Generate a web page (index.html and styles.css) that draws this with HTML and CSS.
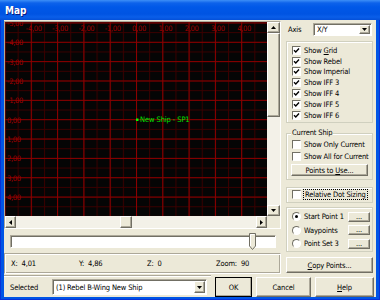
FILE: index.html
```html
<!DOCTYPE html>
<html lang="en">
<head>
<meta charset="UTF-8">
<title>Map</title>
<link rel="stylesheet" href="styles.css">
</head>
<body>
<div class="window">
  <div class="titlebar"><span class="title">Map</span></div>
  <div class="client">
    <div class="main">
      <div class="left">
        <div class="view">
          <div class="canvas">
            <svg width="262" height="194" viewBox="0 0 262 194">
              <defs>
                <pattern id="minor" width="13.15" height="9.675" x="-0.5" y="0.45" patternUnits="userSpaceOnUse">
                  <path d="M0.5 0V9.675M0 0.5H13.15" stroke="#3a0000" stroke-width="1" fill="none"/>
                </pattern>
                <pattern id="major" width="26.3" height="19.35" x="-0.5" y="0.45" patternUnits="userSpaceOnUse">
                  <path d="M0.5 0V19.35M0 0.5H26.3" stroke="#8c0000" stroke-width="1" fill="none"/>
                </pattern>
              </defs>
              <rect width="262" height="194" fill="#050505"/>
              <rect width="262" height="194" fill="url(#minor)"/>
              <rect width="262" height="194" fill="url(#major)"/>
              <g class="xlab" text-anchor="middle">
                <text x="28.8" y="8.5">-4,00</text>
                <text x="55.1" y="8.5">-3,00</text>
                <text x="81.4" y="8.5">-2,00</text>
                <text x="107.7" y="8.5">-1,00</text>
                <text x="134" y="8.5">0,00</text>
                <text x="160.3" y="8.5">1,00</text>
                <text x="186.6" y="8.5">2,00</text>
                <text x="212.9" y="8.5">3,00</text>
                <text x="239.2" y="8.5">4,00</text>
              </g>
              <g class="ylab">
                <text x="2" y="4">-5,00</text>
                <text x="2" y="23.3">-4,00</text>
                <text x="2" y="42.6">-3,00</text>
                <text x="2" y="62">-2,00</text>
                <text x="2" y="81.3">-1,00</text>
                <text x="2" y="100.6">0,00</text>
                <text x="2" y="120">1,00</text>
                <text x="2" y="139.3">2,00</text>
                <text x="2" y="158.7">3,00</text>
                <text x="2" y="178">4,00</text>
              </g>
              <rect x="131" y="96.5" width="2.5" height="2.5" fill="#00ff00"/>
              <text class="ship" x="135" y="100.3">New Ship - SP1</text>
            </svg>
          </div>
          <div class="vscroll">
            <div class="sbtn vbtn"><svg width="5" height="3" viewBox="0 0 5 3"><polygon points="0,3 5,3 2.5,0"/></svg></div>
            <div class="vtrack"><div class="vthumb"></div></div>
            <div class="sbtn vbtn"><svg width="5" height="3" viewBox="0 0 5 3"><polygon points="0,0 5,0 2.5,3"/></svg></div>
          </div>
          <div class="hscroll">
            <div class="sbtn hbtn"><svg width="3" height="5" viewBox="0 0 3 5"><polygon points="3,0 3,5 0,2.5"/></svg></div>
            <div class="htrack"><div class="hthumb"></div></div>
            <div class="sbtn hbtn"><svg width="3" height="5" viewBox="0 0 3 5"><polygon points="0,0 0,5 3,2.5"/></svg></div>
          </div>
          <div class="corner"></div>
        </div>
        <div class="slider">
          <div class="slot"></div>
          <svg class="slider-thumb" width="7" height="17" viewBox="0 0 7 17">
            <polygon points="0.5,0.5 6.5,0.5 6.5,13 3.5,16.5 0.5,13" fill="#ece9d8" stroke="#716f64"/>
            <polyline points="1.5,13 1.5,1.5 5.5,1.5" fill="none" stroke="#fff"/>
          </svg>
        </div>
        <div class="coords">
          <span>X:&nbsp; 4,01</span>
          <span>Y:&nbsp; 4,86</span>
          <span>Z:&nbsp; 0</span>
          <span>Zoom:&nbsp; 90</span>
        </div>
      </div>

      <div class="right">
        <div class="axis-row">
          <span class="axis-label">Axis</span>
          <div class="combo axis-combo">
            <span class="combo-text">X/Y</span>
            <span class="drop"><svg width="5" height="3" viewBox="0 0 5 3"><polygon points="0,0 5,0 2.5,3"/></svg></span>
          </div>
        </div>

        <div class="group show-group">
          <div class="check"><span class="box"><svg width="7" height="7" viewBox="0 0 7 7"><path d="M1 3.2L2.8 5L6 1.6"/></svg></span><span>Show <u>G</u>rid</span></div>
          <div class="check"><span class="box"><svg width="7" height="7" viewBox="0 0 7 7"><path d="M1 3.2L2.8 5L6 1.6"/></svg></span><span>Show Rebel</span></div>
          <div class="check"><span class="box"><svg width="7" height="7" viewBox="0 0 7 7"><path d="M1 3.2L2.8 5L6 1.6"/></svg></span><span>Show Imperial</span></div>
          <div class="check"><span class="box"><svg width="7" height="7" viewBox="0 0 7 7"><path d="M1 3.2L2.8 5L6 1.6"/></svg></span><span>Show IFF 3</span></div>
          <div class="check"><span class="box"><svg width="7" height="7" viewBox="0 0 7 7"><path d="M1 3.2L2.8 5L6 1.6"/></svg></span><span>Show IFF 4</span></div>
          <div class="check"><span class="box"><svg width="7" height="7" viewBox="0 0 7 7"><path d="M1 3.2L2.8 5L6 1.6"/></svg></span><span>Show IFF 5</span></div>
          <div class="check"><span class="box"><svg width="7" height="7" viewBox="0 0 7 7"><path d="M1 3.2L2.8 5L6 1.6"/></svg></span><span>Show IFF 6</span></div>
        </div>

        <div class="group current-group">
          <span class="legend">Current Ship</span>
          <div class="check tall"><span class="box"></span><span>Show Only Current</span></div>
          <div class="check tall"><span class="box"></span><span>Show All for Current</span></div>
          <div class="btn points-btn"><span>Points to <u>U</u>se...</span></div>
        </div>

        <div class="group dot-group">
          <div class="check"><span class="box"></span><span class="focus">Relative Dot Sizing</span></div>
        </div>

        <div class="group point-group">
          <div class="radio-row"><span class="radio on"></span><span class="radio-text">Start Point 1</span><span class="btn dots">...</span></div>
          <div class="radio-row"><span class="radio"></span><span class="radio-text">Waypoints</span><span class="btn dots">...</span></div>
          <div class="radio-row"><span class="radio"></span><span class="radio-text">Point Set 3</span><span class="btn dots">...</span></div>
        </div>

        <div class="btn copy-btn"><span><u>C</u>opy Points...</span></div>
      </div>
    </div>

    <div class="bottom">
      <div class="selbar">
        <span class="sel-label">Selected</span>
        <div class="combo sel-combo">
          <span class="combo-text">(1) Rebel B-Wing New Ship</span>
          <span class="drop"><svg width="5" height="3" viewBox="0 0 5 3"><polygon points="0,0 5,0 2.5,3"/></svg></span>
        </div>
      </div>
      <div class="btn default ok-btn"><span>OK</span></div>
      <div class="btn cancel-btn"><span>Cancel</span></div>
      <div class="btn help-btn"><span><u>H</u>elp</span></div>
    </div>
  </div>
</div>
</body>
</html>
```

FILE: styles.css
```css
body {
    margin: 0;
    width: 380px;
    height: 300px;
    overflow: hidden;
    font-family: "DejaVu Sans Condensed", "Liberation Sans", sans-serif;
    font-stretch: condensed;
    font-size: 7.5px;
    letter-spacing: -0.15px;
    color: #000;
}
.window {
    width: 380px;
    height: 300px;
    display: flex;
    flex-direction: column;
    background: #0055e5;
    box-shadow: inset 1px 0 #0831d9, inset -1px 0 #0831d9, inset 0 -1px #0831d9;
}
.titlebar {
    height: 20px;
    display: flex;
    align-items: center;
    padding-left: 5px;
    background: linear-gradient(to bottom, #3d8ff7 0, #0d62ea 3px, #0058e8 7px, #0054e2 14px, #0a5ee9 17px, #0450d8 20px);
}
.title {
    color: #fff;
    font-weight: bold;
    font-size: 10px;
    letter-spacing: 0;
    text-shadow: 1px 1px #0a1a80;
}
.client {
    flex: 1;
    margin: 0 4px 3px 4px;
    background: #ece9d8;
    display: flex;
    flex-direction: column;
}
.main {
    height: 255px;
    display: flex;
}
.left {
    width: 277px;
    padding-top: 1px;
}

/* map view with scrollbars */
.view {
    display: grid;
    grid-template-columns: 262px 13px;
    grid-template-rows: 194px 12px;
    border: 1px solid;
    border-color: #aca899 #fff #fff #aca899;
}
.canvas svg {
    display: block;
}
.xlab text, .ylab text {
    font-family: "DejaVu Sans Condensed", "Liberation Sans", sans-serif;
    font-size: 7.5px;
    letter-spacing: -0.3px;
    fill: #a00000;
}
.ship {
    font-family: "DejaVu Sans Condensed", "Liberation Sans", sans-serif;
    font-size: 7.5px;
    letter-spacing: -0.1px;
    fill: #00e000;
}
.vscroll {
    display: flex;
    flex-direction: column;
    background: #f3f1e8;
}
.hscroll {
    display: flex;
    background: #f3f1e8;
}
.corner {
    background: #ece9d8;
}
.sbtn, .btn, .drop, .vthumb, .hthumb {
    background: #ece9d8;
    border: 1px solid;
    border-color: #fff #716f64 #716f64 #fff;
    box-shadow: inset -1px -1px #aca899;
    box-sizing: border-box;
}
.sbtn {
    display: flex;
    align-items: center;
    justify-content: center;
}
.vbtn {
    height: 11px;
}
.hbtn {
    width: 11px;
}
.vtrack {
    flex: 1;
}
.vthumb {
    height: 84px;
}
.htrack {
    flex: 1;
}
.hthumb {
    width: 12px;
    height: 12px;
    margin-left: 104px;
}

/* zoom slider */
.slider {
    position: relative;
    margin: 6px 0 0 6px;
    width: 266px;
    height: 13px;
}
.slot {
    height: 13px;
    background: #fff;
    border: 1px solid;
    border-color: #aca899 #fff #fff #aca899;
    box-shadow: inset 1px 1px #716f64;
    box-sizing: border-box;
}
.slider-thumb {
    position: absolute;
    left: 239px;
    top: -2px;
}

.coords {
    margin-top: 5px;
    height: 21px;
    display: grid;
    grid-template-columns: 68px 68px 69px 1fr;
    align-items: center;
    padding-left: 6px;
    border: 1px solid;
    border-color: #aca899 #fff #fff #aca899;
    box-shadow: inset 1px 1px #fff, inset -1px -1px #aca899;
    box-sizing: border-box;
}

/* right panel */
.right {
    margin-left: 5px;
    width: 87px;
}
.axis-row {
    margin-top: 3px;
    height: 13px;
    display: flex;
    align-items: center;
}
.axis-label {
    margin-left: 2px;
    width: 25px;
}
.combo {
    display: flex;
    align-items: center;
    background: #fff;
    border: 1px solid;
    border-color: #aca899 #fff #fff #aca899;
    box-shadow: inset 1px 1px #716f64;
    box-sizing: border-box;
    padding: 1px;
}
.combo-text {
    flex: 1;
    padding-left: 2px;
    white-space: nowrap;
    overflow: hidden;
}
.drop {
    width: 11px;
    align-self: stretch;
    display: flex;
    align-items: center;
    justify-content: center;
}
.axis-combo {
    width: 59px;
    height: 13px;
}
.group {
    position: relative;
    border: 1px solid #d0d0bf;
    box-shadow: inset 1px 1px #fff;
    box-sizing: border-box;
    padding: 0 0 0 5px;
}
.show-group {
    margin-top: 5px;
    height: 82px;
    padding-top: 3px;
}
.check {
    display: flex;
    align-items: center;
    height: 10.8px;
    gap: 3px;
    white-space: nowrap;
}
.check.tall {
    height: 12px;
}
.box {
    width: 9px;
    height: 9px;
    flex: none;
    background: #fff;
    border: 1px solid;
    border-color: #716f64 #fff #fff #716f64;
    box-sizing: border-box;
    display: flex;
    align-items: center;
    justify-content: center;
}
.box path {
    fill: none;
    stroke: #000;
    stroke-width: 1.4;
}
.current-group {
    margin-top: 10px;
    height: 47px;
    padding-top: 4px;
}
.legend {
    position: absolute;
    left: 4px;
    top: -6px;
    padding: 0 1px;
    background: #ece9d8;
}
.btn {
    display: flex;
    align-items: center;
    justify-content: center;
    white-space: nowrap;
}
.points-btn {
    margin: 2px 4px 0 -1px;
    height: 12px;
}
.dot-group {
    margin-top: 7px;
    height: 16px;
    display: flex;
    align-items: center;
}
.focus {
    outline: 1px dotted #000;
    padding: 0 1px;
}
.point-group {
    margin-top: 4px;
    height: 45px;
    padding-top: 2px;
}
.radio-row {
    display: flex;
    align-items: center;
    height: 13.5px;
    gap: 3px;
    white-space: nowrap;
}
.radio {
    position: relative;
    width: 9px;
    height: 9px;
    flex: none;
    border-radius: 50%;
    background: #fff;
    border: 1px solid;
    border-color: #716f64 #fff #fff #716f64;
    box-sizing: border-box;
}
.radio.on::after {
    content: "";
    position: absolute;
    left: 2px;
    top: 2px;
    width: 3px;
    height: 3px;
    border-radius: 50%;
    background: #000;
}
.radio-text {
    flex: 1;
}
.dots {
    width: 22px;
    height: 10px;
    margin-right: 2px;
    align-items: flex-end;
    line-height: 8px;
}
.copy-btn {
    margin-top: 5px;
    height: 16px;
}

/* bottom row */
.bottom {
    flex: 1;
    display: flex;
    align-items: stretch;
    padding-top: 2px;
}
.selbar {
    width: 207px;
    display: flex;
    align-items: center;
    border-top: 1px solid #fff;
    box-shadow: 0 -1px #aca899;
    margin-top: -1px;
}
.sel-label {
    margin-left: 6px;
    width: 42px;
}
.sel-combo {
    width: 155px;
    height: 16px;
}
.ok-btn {
    margin-left: 4px;
    width: 37px;
}
.default {
    outline: 1px solid #000;
    outline-offset: -1px;
}
.cancel-btn {
    margin-left: 4px;
    width: 55px;
}
.help-btn {
    margin-left: 4px;
    width: 59px;
}
```
